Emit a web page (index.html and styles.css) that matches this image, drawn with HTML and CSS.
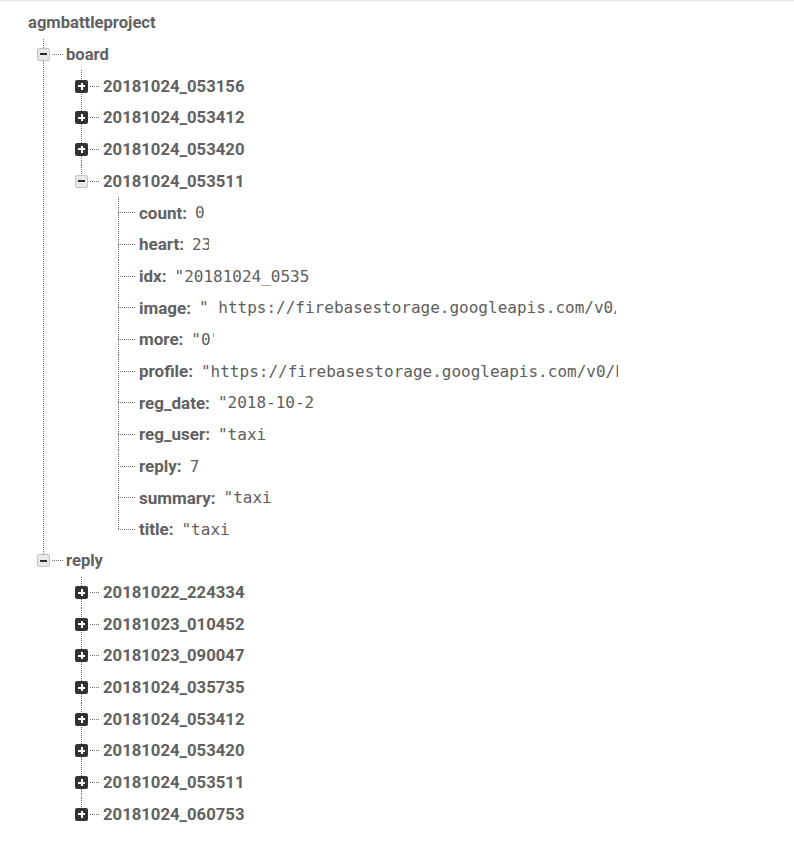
FILE: index.html
```html
<!DOCTYPE html>
<html>
<head>
<meta charset="utf-8">
<link rel="stylesheet" href="styles.css">
</head>
<body>
<div class="topline"></div>
<div class="tree">
  <div class="row root"><span class="key">agmbattleproject</span></div>
  <ul class="kids lvl1">
    <li class="node">
      <div class="row"><span class="tog minus"></span><span class="conn"></span><span class="key">board</span></div>
      <ul class="kids lvl2">
        <li class="node"><div class="row"><span class="tog plus"></span><span class="conn"></span><span class="key num">20181024_053156</span></div></li>
        <li class="node"><div class="row"><span class="tog plus"></span><span class="conn"></span><span class="key num">20181024_053412</span></div></li>
        <li class="node"><div class="row"><span class="tog plus"></span><span class="conn"></span><span class="key num">20181024_053420</span></div></li>
        <li class="node">
          <div class="row"><span class="tog minus"></span><span class="conn"></span><span class="key num">20181024_053511</span></div>
          <ul class="kids leafs">
            <li class="leaf"><div class="row"><span class="lconn"></span><span class="key">count:</span><span class="val">0</span></div></li>
            <li class="leaf"><div class="row"><span class="lconn"></span><span class="key">heart:</span><span class="val w-heart">23</span></div></li>
            <li class="leaf"><div class="row"><span class="lconn"></span><span class="key">idx:</span><span class="val w-idx">"20181024_053511"</span></div></li>
            <li class="leaf"><div class="row"><span class="lconn"></span><span class="key">image:</span><span class="val w-url">" https://firebasestorage.googleapis.com/v0/b/agmbattleproject</span></div></li>
            <li class="leaf"><div class="row"><span class="lconn"></span><span class="key">more:</span><span class="val w-more">"0"</span></div></li>
            <li class="leaf"><div class="row"><span class="lconn"></span><span class="key">profile:</span><span class="val w-url">"https://firebasestorage.googleapis.com/v0/b/agmbattleproject</span></div></li>
            <li class="leaf"><div class="row"><span class="lconn"></span><span class="key">reg_date:</span><span class="val w-date">"2018-10-24 05:35:11"</span></div></li>
            <li class="leaf"><div class="row"><span class="lconn"></span><span class="key">reg_user:</span><span class="val w-taxi">"taxi"</span></div></li>
            <li class="leaf"><div class="row"><span class="lconn"></span><span class="key">reply:</span><span class="val">7</span></div></li>
            <li class="leaf"><div class="row"><span class="lconn"></span><span class="key">summary:</span><span class="val w-taxi">"taxi"</span></div></li>
            <li class="leaf"><div class="row"><span class="lconn"></span><span class="key">title:</span><span class="val w-taxi">"taxi"</span></div></li>
          </ul>
        </li>
      </ul>
    </li>
    <li class="node">
      <div class="row"><span class="tog minus"></span><span class="conn"></span><span class="key">reply</span></div>
      <ul class="kids lvl2">
        <li class="node"><div class="row"><span class="tog plus"></span><span class="conn"></span><span class="key num">20181022_224334</span></div></li>
        <li class="node"><div class="row"><span class="tog plus"></span><span class="conn"></span><span class="key num">20181023_010452</span></div></li>
        <li class="node"><div class="row"><span class="tog plus"></span><span class="conn"></span><span class="key num">20181023_090047</span></div></li>
        <li class="node"><div class="row"><span class="tog plus"></span><span class="conn"></span><span class="key num">20181024_035735</span></div></li>
        <li class="node"><div class="row"><span class="tog plus"></span><span class="conn"></span><span class="key num">20181024_053412</span></div></li>
        <li class="node"><div class="row"><span class="tog plus"></span><span class="conn"></span><span class="key num">20181024_053420</span></div></li>
        <li class="node"><div class="row"><span class="tog plus"></span><span class="conn"></span><span class="key num">20181024_053511</span></div></li>
        <li class="node"><div class="row"><span class="tog plus"></span><span class="conn"></span><span class="key num">20181024_060753</span></div></li>
      </ul>
    </li>
  </ul>
</div>
</body>
</html>
```

FILE: styles.css
```css
html, body {
  margin: 0;
  padding: 0;
  background: #ffffff;
}

.topline {
  height: 1px;
  background: #e6e6e6;
  box-shadow: 0 1px 1px rgba(0, 0, 0, 0.06);
}

.tree {
  padding: 6px 0 0 28px;
  font-family: Roboto, "Liberation Sans", sans-serif;
}

ul {
  list-style: none;
  margin: 0;
  padding: 0;
}

.row {
  display: flex;
  align-items: center;
  height: 31.67px;
  white-space: nowrap;
}

.lvl1 { margin-left: 15px; }
.lvl2 { margin-left: 38px; }
.leafs { margin-left: 37px; }

.kids > li {
  background: repeating-linear-gradient(to bottom, #6f6f6f 0 1px, transparent 1px 2px) left top / 1px 100% no-repeat;
}

.kids > li:last-child {
  background-size: 1px 16px;
}

.tog {
  flex: none;
  width: 13px;
  height: 13px;
  margin-left: -6px;
  box-sizing: border-box;
  border-radius: 2px;
}

.plus {
  background:
    linear-gradient(#ffffff, #ffffff) center / 7px 2px no-repeat,
    linear-gradient(#ffffff, #ffffff) center / 2px 7px no-repeat,
    #333333;
}

.minus {
  border: 1px solid #c4c4c4;
  background:
    linear-gradient(#2b2b2b, #2b2b2b) center / 7px 2px no-repeat,
    #e8e8e8;
}

.conn {
  flex: none;
  width: 11px;
  height: 1px;
  margin: 0 3px 0 2px;
  background: repeating-linear-gradient(to right, #6f6f6f 0 1px, transparent 1px 2px);
}

.lvl2 .conn {
  width: 10px;
}

.lconn {
  flex: none;
  width: 18px;
  height: 1px;
  margin-right: 3px;
  background: repeating-linear-gradient(to right, #6f6f6f 0 1px, transparent 1px 2px);
}

.key {
  font-weight: 700;
  font-size: 16.6px;
  color: #616161;
}

.root .key {
  font-size: 16.6px;
}

.key.num {
  font-size: 16.7px;
}

.leaf .key {
  font-size: 17px;
}

.val {
  display: inline-block;
  overflow: hidden;
  margin-left: 8px;
  font-family: "DejaVu Sans Mono", "Liberation Mono", monospace;
  font-size: 16px;
  color: #5e5e5e;
  white-space: nowrap;
}

.w-heart { width: 1.75ch; }
.w-idx { width: 14ch; }
.w-url { width: 43.3ch; }
.w-more { width: 2.3ch; }
.w-date { width: 10ch; }
.w-taxi { width: 5ch; }
```
